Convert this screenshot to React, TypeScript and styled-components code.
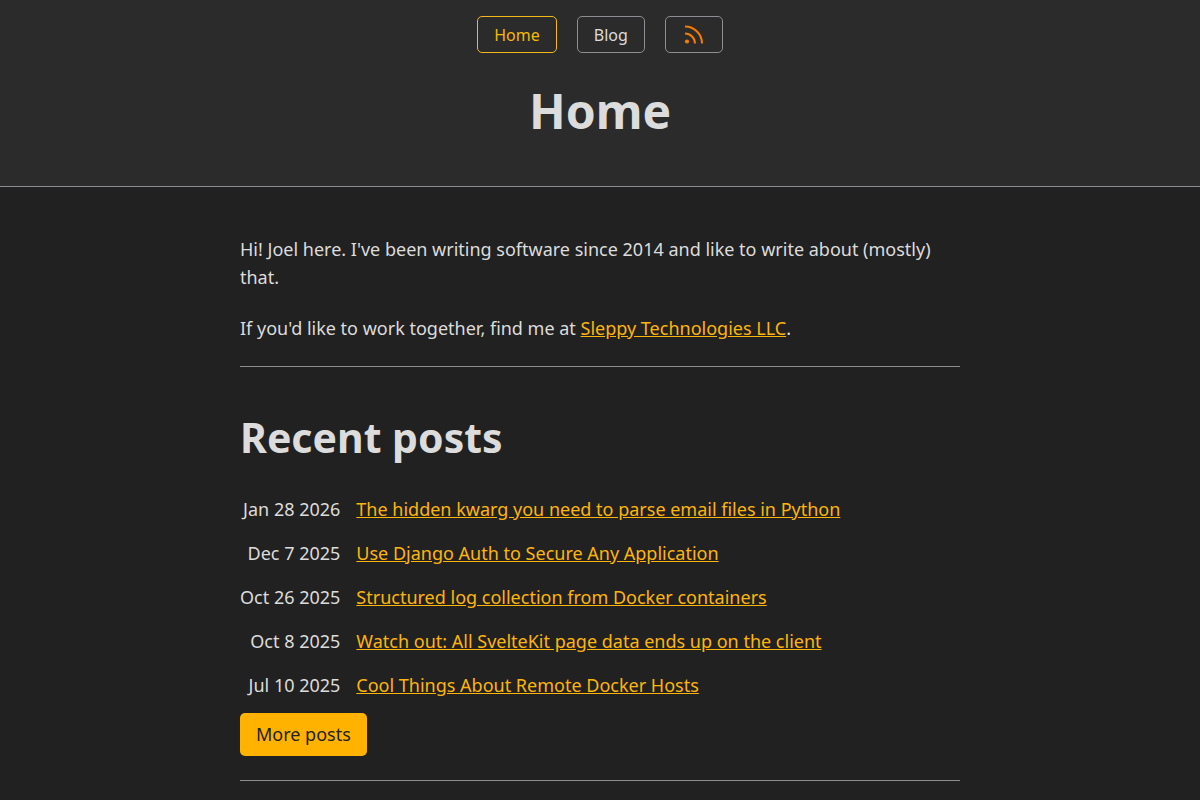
import React from "react";
import styled, { createGlobalStyle } from "styled-components";

const Global = createGlobalStyle`
  *, *::before, *::after { box-sizing: border-box; }
  body {
    margin: 0;
    background: #212121;
    color: #dcdcdc;
    font-family: "Noto Sans", sans-serif;
    font-size: 18px;
    line-height: 28px;
    overflow-x: hidden;
  }
`;

const Header = styled.header`
  display: flex;
  flex-direction: column;
  align-items: center;
  padding: 16px 16px 32px;
  background: #2b2b2b;
  border-bottom: 1px solid #8e8e92;
`;

const Nav = styled.nav`
  display: flex;
  gap: 20px;
`;

const NavLink = styled.a<{ $current?: boolean }>`
  display: flex;
  align-items: center;
  height: 37px;
  padding: 0 16px;
  border: 1px solid ${(p) => (p.$current ? "#f5b81c" : "#8e8e92")};
  border-radius: 5px;
  color: ${(p) => (p.$current ? "#f5b80c" : "#dcdcdc")};
  font-size: 16px;
  line-height: 24px;
  text-decoration: none;
`;

const Title = styled.h1`
  margin: 30px 0 15px;
  font-size: 48px;
  line-height: 56px;
  font-weight: 700;
`;

const Main = styled.main`
  width: 100%;
  max-width: 752px;
  margin: 0 auto;
  padding: 48px 16px 24px;
`;

const Paragraph = styled.p`
  margin: 0 0 23px;
`;

const Link = styled.a`
  color: #fdb50c;
`;

const Rule = styled.hr`
  margin: 24px 0;
  border: 0;
  border-top: 1px solid #8e8e92;
`;

const Heading = styled.h2`
  margin: 46px 0 34px;
  font-size: 41px;
  line-height: 48px;
  font-weight: 700;
`;

const Posts = styled.ul`
  display: grid;
  grid-template-columns: max-content 1fr;
  gap: 16px;
  margin: 0;
  padding: 0;
  list-style: none;
`;

const Post = styled.li`
  display: grid;
  grid-column: 1 / -1;
  grid-template-columns: subgrid;
`;

const PostDate = styled.time`
  text-align: right;
`;

const ButtonLink = styled.a`
  display: inline-block;
  margin-top: 14px;
  padding: 8px 16px;
  border-radius: 5px;
  background: #ffb300;
  color: #212121;
  line-height: 27px;
  text-decoration: none;
`;

const posts = [
  ["Jan 28 2026", "The hidden kwarg you need to parse email files in Python"],
  ["Dec 7 2025", "Use Django Auth to Secure Any Application"],
  ["Oct 26 2025", "Structured log collection from Docker containers"],
  ["Oct 8 2025", "Watch out: All SvelteKit page data ends up on the client"],
  ["Jul 10 2025", "Cool Things About Remote Docker Hosts"],
];

const FeedIcon = () => (
  <svg width="24" height="24" viewBox="0 0 24 24" fill="none" stroke="#f57c00" strokeWidth="2" aria-hidden="true">
    <path d="M3 10.5a10 10 0 0 1 10 10" />
    <path d="M3 3.5a17 17 0 0 1 17 17" />
    <circle cx="5" cy="18.5" r="2.1" fill="#f57c00" stroke="none" />
  </svg>
);

export default function App() {
  return (
    <>
      <Global />
      <Header>
        <Nav>
          <NavLink href="/" $current aria-current="page">Home</NavLink>
          <NavLink href="/blog">Blog</NavLink>
          <NavLink href="/rss" aria-label="RSS feed"><FeedIcon /></NavLink>
        </Nav>
        <Title>Home</Title>
      </Header>
      <Main>
        <Paragraph>
          Hi! Joel here. I've been writing software since 2014 and like to write about (mostly) that.
        </Paragraph>
        <Paragraph>
          If you'd like to work together, find me at <Link href="#sleppy">Sleppy Technologies LLC</Link>.
        </Paragraph>
        <Rule />
        <Heading>Recent posts</Heading>
        <Posts>
          {posts.map(([date, title]) => (
            <Post key={title}>
              <PostDate>{date}</PostDate>
              <span><Link href="/blog">{title}</Link></span>
            </Post>
          ))}
        </Posts>
        <ButtonLink href="/blog">More posts</ButtonLink>
        <Rule />
      </Main>
    </>
  );
}
